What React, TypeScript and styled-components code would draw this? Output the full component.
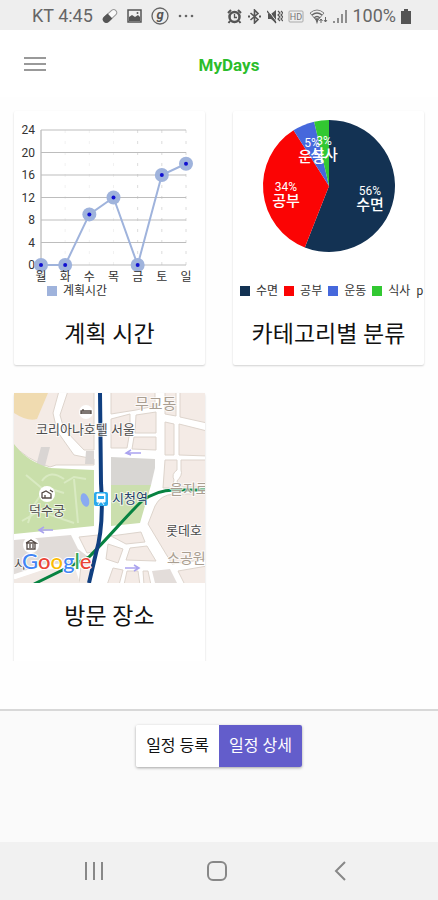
import React from "react";
import styled, { createGlobalStyle } from "styled-components";

const GlobalStyle = createGlobalStyle`
  *, *::before, *::after { box-sizing: border-box; }
  body { margin: 0; background: #fefefe; }
  body, button { font-family: Roboto, "Noto Sans CJK KR", sans-serif; }
`;

const Screen = styled.div`
  display: flex;
  flex-direction: column;
  height: 100vh;
  color: #111;
`;

const StatusBar = styled.div`
  display: flex;
  flex: none;
  align-items: center;
  justify-content: space-between;
  height: 30px;
  padding: 2px 27px 0 32px;
  background: #eeeeee;
  color: #666;
  font-size: 18px;
  line-height: 28px;
`;

const StatusGroup = styled.div<{ $gap: number }>`
  display: flex;
  align-items: center;
  gap: ${(p) => p.$gap}px;
  white-space: nowrap;
`;

const Header = styled.header`
  display: flex;
  flex: none;
  align-items: center;
  height: 67px;
  padding: 2px 26px 0 24px;
  background: #fff;
`;

const IconButton = styled.button`
  display: flex;
  align-items: center;
  justify-content: center;
  padding: 0;
  border: 0;
  background: none;
  cursor: pointer;
`;

const AppTitle = styled.h1`
  flex: 1;
  margin: 0;
  color: #2bbd2b;
  font-size: 17px;
  font-weight: 700;
  line-height: 24px;
  text-align: center;
`;

const Scroller = styled.main`
  flex: 1;
  min-height: 0;
  margin-bottom: 48px;
  overflow-y: auto;
  scrollbar-width: none;
`;

const CardGrid = styled.div`
  display: grid;
  grid-template-columns: repeat(2, minmax(0, 1fr));
  align-items: start;
  gap: 28px;
  padding: 14px;
`;

const Card = styled.section<{ $extra?: number }>`
  padding-bottom: ${(p) => p.$extra ?? 0}px;
  border-radius: 2px;
  background: #fff;
  box-shadow: 0 1px 2px rgba(0, 0, 0, 0.18);
`;

const Drawing = styled.svg<{ $clip?: boolean }>`
  display: block;
  width: 100%;
  height: auto;
  overflow: ${(p) => (p.$clip ? "hidden" : "visible")};
`;

const Legend = styled.ul<{ $indent: number }>`
  display: flex;
  align-items: center;
  gap: 6px;
  height: 20px;
  margin: 0;
  padding: 0 0 0 ${(p) => p.$indent}px;
  overflow: hidden;
  list-style: none;
`;

const LegendItem = styled.li`
  display: flex;
  flex: none;
  align-items: center;
  gap: 6px;
  color: #333;
  font-size: 12px;
  line-height: 20px;
`;

const Swatch = styled.span<{ $color: string }>`
  width: 10px;
  height: 10px;
  background: ${(p) => p.$color};
`;

const CardTitle = styled.h2`
  margin: 0;
  padding: 18px 0 14px;
  font-size: 23px;
  font-weight: 400;
  line-height: 32px;
  text-align: center;
  white-space: nowrap;
`;

const Footer = styled.footer`
  display: flex;
  flex: none;
  align-items: flex-start;
  justify-content: center;
  height: 133px;
  padding-top: 14px;
  border-top: 2px solid #d8d8d8;
  background: #fafafa;
`;

const ButtonGroup = styled.div`
  display: flex;
  border-radius: 2px;
  box-shadow: 0 1px 3px rgba(0, 0, 0, 0.35);
`;

const ActionButton = styled.button<{ $active?: boolean }>`
  height: 42px;
  padding: 0 10px;
  border: 0;
  border-radius: ${(p) => (p.$active ? "0 2px 2px 0" : "2px 0 0 2px")};
  background: ${(p) => (p.$active ? "#635dcb" : "#fff")};
  color: ${(p) => (p.$active ? "#fff" : "#111")};
  font-size: 16px;
  line-height: 24px;
  cursor: pointer;
`;

const NavBar = styled.nav`
  display: grid;
  flex: none;
  grid-template-columns: repeat(3, 1fr);
  height: 58px;
  padding: 0 37px 0 33px;
  background: #f1f1f1;
`;

const days = ["월", "화", "수", "목", "금", "토", "일"];
const hours = [0, 0, 9, 12, 0, 16, 18];
const ticks = [0, 4, 8, 12, 16, 20, 24];
const dayX = (i: number) => 27 + (i * 145) / 6;
const hourY = (v: number) => 154 - (v * 135) / 24;

function LineChart() {
  return (
    <Drawing viewBox="0 0 191 170" role="img" aria-label="계획시간">
      {days.map((d, i) => (
        <line key={d} x1={dayX(i)} x2={dayX(i)} y1={19} y2={154}
          stroke={i === 0 ? "#a8a8a8" : "#dcdcdc"} strokeDasharray={i === 0 ? undefined : "3 8"}
          strokeOpacity={i > 0 && i < 4 ? 0.4 : 1} />
      ))}
      {ticks.map((t) => (
        <g key={t}>
          <line x1={27} x2={172} y1={hourY(t)} y2={hourY(t)} stroke="#bdbdbd" />
          <text x={21} y={hourY(t) + 4} textAnchor="end" fontSize={12} fill="#333">{t}</text>
        </g>
      ))}
      <polyline points={hours.map((v, i) => `${dayX(i)},${hourY(v)}`).join(" ")}
        fill="none" stroke="#9fb3dc" strokeWidth={2} />
      {hours.map((v, i) => (
        <circle key={i} cx={dayX(i)} cy={hourY(v)} r={7} fill="#9fb3dc" />
      ))}
      {days.map((d, i) => (
        <text key={d} x={dayX(i)} y={170} textAnchor="middle" fontSize={12} fill="#333">{d}</text>
      ))}
      {hours.map((v, i) => (
        <circle key={i} cx={dayX(i)} cy={hourY(v)} r={2} fill="#1010d0" />
      ))}
    </Drawing>
  );
}

const slices = [
  { name: "수면", pct: "56%", color: "#133253", from: 0, to: 201.5, x: 137, y: 98 },
  { name: "공부", pct: "34%", color: "#fb0404", from: 201.5, to: 327.5, x: 53, y: 94 },
  { name: "운동", pct: "5%", color: "#4668dc", from: 327.5, to: 347, x: 79, y: 50 },
  { name: "식사", pct: "3%", color: "#32c832", from: 347, to: 360, x: 91, y: 48 },
];

function slicePath(from: number, to: number) {
  const point = (deg: number) => {
    const a = (deg * Math.PI) / 180;
    return `${96 + 66 * Math.sin(a)} ${75 - 66 * Math.cos(a)}`;
  };
  return `M96 75 L${point(from)} A66 66 0 ${to - from > 180 ? 1 : 0} 1 ${point(to)}Z`;
}

function PieChart() {
  return (
    <Drawing viewBox="0 0 191 170" role="img" aria-label="카테고리별 분류">
      {slices.map((s) => <path key={s.name} d={slicePath(s.from, s.to)} fill={s.color} />)}
      {slices.map((s) => (
        <g key={s.name} fill="#fff" textAnchor="middle">
          <text x={s.x} y={s.y - 14} fontSize={12}>{s.pct}</text>
          <text x={s.x} y={s.y + 1} fontSize={15} fontWeight={500}>{s.name}</text>
        </g>
      ))}
    </Drawing>
  );
}

const googleLetters = [
  ["G", "#4285f4"], ["o", "#ea4335"], ["o", "#fbbc05"], ["g", "#4285f4"], ["l", "#34a853"], ["e", "#ea4335"],
];

function StreetMap() {
  return (
    <Drawing $clip viewBox="0 0 191 190" role="img" aria-label="방문 장소 지도">
      <rect width="191" height="190" fill="#fff" />
      <g fill="#f4ebe6" stroke="#ddd4cc" strokeLinejoin="round">
        <path d="M-2 -2H45L39 20 43 38 60 62 80 66V72H42L36 74Q12 67 -2 50Z" />
        <path d="M54 -2H80V57H70L50 36 46 22Z" />
        <path d="M97 -2H141V13L122 17 97 21Z M97 26L116 21V38L113 55H97Z M122 22L142 19V40H121Z M120 44H142V57L118 56Z" />
        <path d="M151 -2H162V23L151 21Z M166 -2H193V30L166 24Z M151 29L160 31V62H151Z M165 31L193 38V63L165 62Z" />
        <path d="M151 67H163V77Q157 81 160 87L158 95H149Z M167 67H193V94H165L163 88Q169 82 167 77Z" />
        <path d="M134 131L141 113Q146 102 160 101H193V166L158 171Z" />
        <path d="M97 143L127 139 131 149 112 151Z M94 151L109 156 104 170 92 166Z M116 155L133 153 142 168 112 167Z" />
        <path d="M99 175L109 177 105 192H93Z M113 178H124L126 192H110Z M129 178H134L137 192H130Z M164 178L193 173V192H171Z" />
        <path d="M65 144L84 142V158L73 160Z M67 172L78 170 74 192H65Z" />
      </g>
      <path d="M138 178L156 176 163 190H141Z" fill="#e3ddda" />
      <path d="M0 0H34L23 26Q14 29 0 20V12Z" fill="#f0dbb0" />
      <path d="M27 54H36L31 73H22Z M72 58H80V71H71Z" fill="#d9d5d3" />
      <path d="M0 51Q12 68 36 75L80 77V133L0 141Z" fill="#c9dfaa" />
      <path d="M12 82L30 97 20 112 14 130M28 88Q36 76 50 86M50 90L60 84 72 86M60 86L64 130M30 94L50 100M8 128L25 118 60 130" fill="none" stroke="#d9eac2" strokeWidth="2" />
      <path d="M0 147L57 142 64 156 77 166 75 170 0 182Z" fill="#e1dcd9" />
      <path d="M0 186L30 176 61 175 66 190H0Z" fill="#f1e9e4" />
      <path d="M0 184L30 174 70 172" fill="none" stroke="#fff" strokeWidth="5" />
      <path d="M97 64L141 66V75L137 92H97Z" fill="#d8d6d3" />
      <path d="M97 92H137L126 130 97 133Z" fill="#cbdfae" />
      <path d="M20 191L75 164C94 145 116 119 128 108Q144 96 163 97H191" fill="none" stroke="#078341" strokeWidth="3" />
      <path d="M86 0L87 90Q90 134 82 160L75 190" fill="none" stroke="#103f80" strokeWidth="4" />
      <path d="M127 60H112M117 57L112 60 117 62M39 137H25M30 134L25 137 30 140M111 175H125M120 172L125 175 120 178"
        fill="none" stroke="#aaa3ef" strokeWidth="1.5" />
      <ellipse cx="71" cy="107" rx="4" ry="7" fill="#89aaf1" transform="rotate(-18 71 107)" />
      <g fill="#fff">
        <circle cx="72" cy="19" r="7" /><circle cx="33" cy="101" r="8" /><circle cx="17" cy="152" r="8" />
      </g>
      <g fill="none" stroke="#554b46" strokeWidth="1.3">
        <path d="M67 21V18H77V21M67 20H77M69 18V16M28 105V100L32 98 37 101V105H28M31 105V102M36 97L39 99M12 150L17 147 22 150H12M13 150V156H21V150M16 151V155M19 151V155" />
      </g>
      <rect x="80" y="99" width="14" height="14" rx="2" fill="#28a9ed" />
      <path d="M83 101H91V109H83Z M84 112L86 109M90 112L88 109" fill="#fff" stroke="#fff" />
      <path d="M84 103H90V106H84Z" fill="#28a9ed" />
      <g fontSize="13" fill="#4d4d4d" stroke="#fff" strokeWidth="2" strokeOpacity="0.7" paintOrder="stroke">
        <text x="22" y="41">코리아나호텔 서울</text>
        <text x="15" y="122">덕수궁</text>
        <text x="98" y="110" fill="#24406b">시청역</text>
        <text x="152" y="142">롯데호</text>
        <text x="0" y="175">시</text>
        <g fill="#a99e91">
          <text x="121" y="16" fontSize="15">무교동</text>
          <text x="156" y="101" fontSize="14">을지로</text>
          <text x="153" y="170" fontSize="14">소공원</text>
        </g>
      </g>
      <text x="8" y="176" fontSize="22" fontWeight="500" fontFamily="Lato, sans-serif" stroke="#fff" strokeWidth="2" paintOrder="stroke">
        {googleLetters.map(([letter, color], i) => <tspan key={i} fill={color}>{letter}</tspan>)}
      </text>
    </Drawing>
  );
}

function NotificationIcons() {
  return (
    <>
      <svg width="16" height="16" viewBox="0 0 16 16">
        <g transform="rotate(-43 8 8)">
          <rect x="0" y="5" width="16" height="6" rx="3" fill="#fafafa" stroke="#999" />
          <path d="M8 4.500H3A3.500 3.500 0 0 0 3 11.500H8Z" fill="#555" />
        </g>
      </svg>
      <svg width="15" height="14" viewBox="0 0 15 14">
        <rect x="1" y="1" width="13" height="12" fill="#eee" stroke="#555" strokeWidth="1.5" />
        <path d="M2 11V8L5 6 8 8 11 6 13 8V12H2Z" fill="#555" /><circle cx="10.500" cy="4" r="1" fill="#555" />
      </svg>
      <svg width="18" height="18" viewBox="0 0 18 18">
        <circle cx="9" cy="9" r="8" fill="none" stroke="#666" strokeWidth="1.3" />
        <text x="9" y="12" textAnchor="middle" fontSize="13" fontWeight="700" fontStyle="italic" fill="#555">g</text>
      </svg>
      <svg width="16" height="4" viewBox="0 0 16 4" fill="#666">
        <circle cx="2" cy="2" r="1.300" /><circle cx="8" cy="2" r="1.300" /><circle cx="14" cy="2" r="1.300" />
      </svg>
    </>
  );
}

function SystemIcons() {
  return (
    <>
      <svg width="15" height="15" viewBox="0 0 15 15" fill="none" stroke="#555">
        <circle cx="7.500" cy="8" r="5" strokeWidth="2.500" />
        <path d="M1 4L4 1M14 4L11 1M3 12L1.500 14M12 12L13.500 14" strokeWidth="2" />
        <path d="M7.500 5V8.500H10" strokeWidth="1.300" />
      </svg>
      <svg width="15" height="15" viewBox="0 0 15 15" fill="none" stroke="#555" strokeWidth="1.600">
        <path d="M3.500 4L11 10.500 7.500 14V1L11 4.500 3.500 11" /><path d="M1 7.500H3M12 7.500H14" strokeWidth="2" />
      </svg>
      <svg width="16" height="15" viewBox="0 0 16 15" fill="none" stroke="#555">
        <path d="M1 5H4L9 1V14L4 10H1Z" fill="#555" stroke="none" />
        <path d="M1 1L10 13" stroke="#eee" /><path d="M0 2L9 14" strokeWidth="1.300" />
        <path d="M11 2L13 4 11 6 13 8 11 10 13 12M14 2L16 4 14 6 16 8 14 10 16 12" strokeWidth="1.200" />
      </svg>
      <svg width="16" height="13" viewBox="0 0 16 13">
        <rect x="1" y="1" width="14" height="11" rx="1" fill="none" stroke="#aaa" />
        <text x="8" y="10" textAnchor="middle" fontSize="9" fill="#777">HD</text>
      </svg>
      <svg width="19" height="15" viewBox="0 0 19 15" fill="none" stroke="#666" strokeWidth="1.400">
        <path d="M1 4Q8 -2 15 4L8 12Z" strokeWidth="0.800" />
        <path d="M3 6Q8 2 13 6M5 9Q8 6 11 9" /><path d="M7 10H9L8 13Z" fill="#666" />
        <path d="M12 14V10M10.500 12L12 10 13.500 12M16.500 8V13M15 11L16.500 13 18 11" strokeWidth="1" />
      </svg>
      <svg width="14" height="15" viewBox="0 0 14 15" stroke="#777" strokeWidth="1.600">
        <path d="M1 14V12M5 14V9M9 14V5M13 14V1" />
      </svg>
    </>
  );
}

export default function App() {
  return (
    <>
      <GlobalStyle />
      <Screen>
        <StatusBar>
          <StatusGroup $gap={9}>
            <span>KT 4:45</span>
            <NotificationIcons />
          </StatusGroup>
          <StatusGroup $gap={5}>
            <SystemIcons />
            <span>100%</span>
            <svg width="10" height="15" viewBox="0 0 10 15" fill="#555"><path d="M3 0H7V2H10V15H0V2H3Z" /></svg>
          </StatusGroup>
        </StatusBar>
        <Header>
          <IconButton type="button" aria-label="메뉴">
            <svg width="22" height="16" viewBox="0 0 22 16" stroke="#999" strokeWidth="2">
              <path d="M0 1H22M0 7H22M0 13H22" />
            </svg>
          </IconButton>
          <AppTitle>MyDays</AppTitle>
        </Header>
        <Scroller>
          <CardGrid>
            <Card>
              <LineChart />
              <Legend $indent={33}>
                <LegendItem><Swatch $color="#9fb3dc" />계획시간</LegendItem>
              </Legend>
              <CardTitle>계획 시간</CardTitle>
            </Card>
            <Card>
              <PieChart />
              <Legend $indent={7}>
                {slices.map((s) => (
                  <LegendItem key={s.name}><Swatch $color={s.color} />{s.name}</LegendItem>
                ))}
                <LegendItem>p</LegendItem>
              </Legend>
              <CardTitle>카테고리별 분류</CardTitle>
            </Card>
            <Card $extra={40}>
              <StreetMap />
              <CardTitle>방문 장소</CardTitle>
            </Card>
          </CardGrid>
        </Scroller>
        <Footer>
          <ButtonGroup>
            <ActionButton type="button">일정 등록</ActionButton>
            <ActionButton type="button" $active>일정 상세</ActionButton>
          </ButtonGroup>
        </Footer>
        <NavBar>
          <IconButton type="button" aria-label="최근 앱">
            <svg width="20" height="20" viewBox="0 0 20 20" stroke="#888" strokeWidth="2"><path d="M2 1V19M10 1V19M18 1V19" /></svg>
          </IconButton>
          <IconButton type="button" aria-label="홈">
            <svg width="20" height="20" viewBox="0 0 20 20" fill="none" stroke="#888" strokeWidth="2"><rect x="1" y="1" width="18" height="18" rx="5" /></svg>
          </IconButton>
          <IconButton type="button" aria-label="뒤로">
            <svg width="12" height="20" viewBox="0 0 12 20" fill="none" stroke="#888" strokeWidth="2"><path d="M11 1L2 10 11 19" /></svg>
          </IconButton>
        </NavBar>
      </Screen>
    </>
  );
}
